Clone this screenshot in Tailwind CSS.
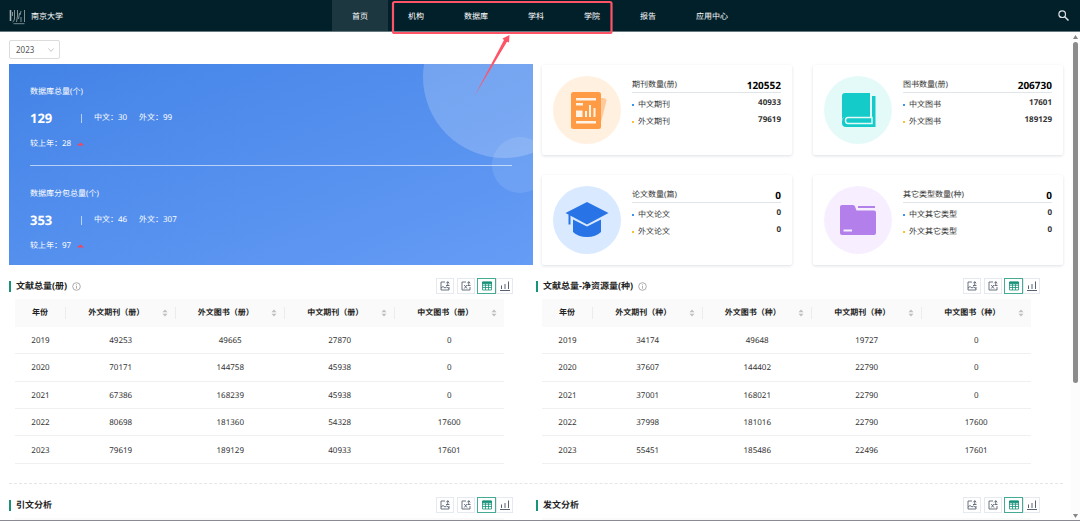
<!DOCTYPE html>
<html lang="zh-CN">
<head>
<meta charset="utf-8">
<meta name="viewport" content="width=device-width, initial-scale=1">
<title>南京大学</title>
<script src="https://cdn.jsdelivr.net/npm/@tailwindcss/browser@4"></script>
</head>
<body class="font-['Noto_Sans','Noto_Sans_CJK_SC',sans-serif] text-[8px] leading-3 text-[#333] bg-white [text-rendering:geometricPrecision]">
<svg class="hidden">
  <symbol id="i-image" viewBox="0 0 20 20" fill="none" stroke="currentColor" stroke-width="1.8">
    <path d="M10 2H2v16h16v-6M2 14l4-3 4 3 3-2 5 3M15.500 1v8M12.500 4.500l3-3 3 3M12 9h7"/>
  </symbol>
  <symbol id="i-excel" viewBox="0 0 20 20" fill="none" stroke="currentColor" stroke-width="1.8">
    <path d="M10 2H2v16h16v-6M6.500 8l5.500 7M12 8l-5.500 7M15.500 1v8M12.500 4.500l3-3 3 3M13 9h6"/>
  </symbol>
  <symbol id="i-table" viewBox="0 0 20 20" fill="none" stroke="currentColor" stroke-width="1.6">
    <path fill="currentColor" d="M1 2h18v3.500H1z"/><path d="M1 2h18v16H1zM1 8.500h18M1 13h18M7 6v12M13 6v12"/>
  </symbol>
  <symbol id="i-bars" viewBox="0 0 20 20" fill="none" stroke="currentColor" stroke-width="2">
    <path d="M0 19h20M3 16V9M10 16V6M17 16V1"/>
  </symbol>
  <symbol id="i-info" viewBox="0 0 20 20" fill="none" stroke="currentColor" stroke-width="1.8">
    <circle cx="10" cy="10" r="8.500"/><path d="M10 8.500V15M10 5v2"/>
  </symbol>
</svg>

<div class="relative h-screen flex flex-col overflow-hidden border-b border-[#8b8a93]">
  <header class="h-8 shrink-0 grid grid-cols-[1fr_auto_1fr] bg-[#02202a] text-white border-b border-[#66797e]">
    <a href="#" class="flex items-center gap-1.5 pl-[9px] pt-0.5">
      <svg class="w-4 h-4" viewBox="0 0 16 16" fill="none" stroke="#a9b5b8" stroke-width="1">
        <path stroke-width="1.600" d="M1.500 1v11"/><path d="M3.500 3v4M5.500 1v9q0 2-2 3M8.500 1v6l-1 6M10.500 4l-1 6M12 2l-1 4M12 8v5M15.500 1v12" opacity=".75"/><path d="M4.500 14.700h11" opacity=".7"/>
      </svg>
      <span>南京大学</span>
    </a>
    <nav class="flex">
      <a href="#" class="px-5 pt-0.5 flex items-center bg-[#1c373f]">首页</a>
      <a href="#" class="px-5 pt-0.5 flex items-center">机构</a>
      <a href="#" class="px-5 pt-0.5 flex items-center">数据库</a>
      <a href="#" class="px-5 pt-0.5 flex items-center">学科</a>
      <a href="#" class="px-5 pt-0.5 flex items-center">学院</a>
      <a href="#" class="px-5 pt-0.5 flex items-center">报告</a>
      <a href="#" class="px-5 pt-0.5 flex items-center">应用中心</a>
    </nav>
    <button type="button" aria-label="搜索" class="justify-self-end pr-[11px]">
      <svg class="w-[11px] h-[11px]" viewBox="0 0 11 11" fill="none" stroke="#dbe1e2" stroke-width="1.200"><circle cx="4.200" cy="4.200" r="3.300"/><path stroke-width="1.500" d="M6.500 6.500l4 4"/></svg>
    </button>
  </header>

  <div class="flex flex-1 min-h-0">
    <main class="flex-1 min-w-0 overflow-hidden pl-[9px] pr-2 pt-2">
      <div class="relative w-[51px]">
        <label for="year" class="sr-only">年份</label>
        <select id="year" class="block appearance-none w-full h-[19px] py-0 leading-[17px] border border-[#dcdcdc] rounded-xs bg-white pl-1.5 text-[#555]"><option>2023</option></select>
        <svg class="absolute right-1.5 top-2 w-1.5 h-1 pointer-events-none" viewBox="0 0 6 4" fill="none" stroke="#bbb" stroke-width=".8"><path d="M.4.400L3 3.400 5.600.4"/></svg>
      </div>

      <div class="mt-[5px] grid grid-cols-[524fr_521fr] gap-[9px]">
        <section class="relative overflow-hidden h-[201px] bg-linear-to-br from-[#4383e6] to-[#659cf6] text-white px-[21px] pt-[22px]">
          <div class="absolute w-[162px] h-[162px] rounded-full bg-white/20 -top-[68px] -right-[52px]"></div>
          <div class="absolute w-14 h-14 rounded-full bg-white/10 top-[73px] -right-[15px]"></div>
          <div class="relative flex flex-col">
            <h2>数据库总量(个)</h2>
            <div class="mt-2.5 h-5 flex items-center">
              <strong class="w-[51px] text-[13px] leading-5">129</strong><i class="w-px h-[9px] bg-white/60 mr-3"></i>
              <span class="w-[45px]">中文：30</span><span>外文：99</span>
            </div>
            <p class="mt-2.5 flex items-center gap-1.5">较上年：28<svg class="w-[7px] h-1" viewBox="0 0 7 4"><path fill="#f5455c" d="M0 3.500L3.500.500 7 3.500z"/></svg></p>
            <hr class="mt-[15px] border-0 h-px bg-white/60">
            <h2 class="mt-[22px]">数据库分包总量(个)</h2>
            <div class="mt-2.5 h-5 flex items-center">
              <strong class="w-[51px] text-[13px] leading-5">353</strong><i class="w-px h-[9px] bg-white/60 mr-3"></i>
              <span class="w-[45px]">中文：46</span><span>外文：307</span>
            </div>
            <p class="mt-2.5 flex items-center gap-1.5">较上年：97<svg class="w-[7px] h-1" viewBox="0 0 7 4"><path fill="#f5455c" d="M0 3.500L3.500.500 7 3.500z"/></svg></p>
          </div>
        </section>

        <div class="grid grid-cols-2 gap-x-[21px] gap-y-5 pt-px">
          <article class="flex gap-[11px] p-[11px] rounded-xs shadow-[0_1px_3px_#0b2a5026]">
            <svg class="w-[68px] h-[68px] shrink-0" viewBox="0 0 68 68"><circle cx="34" cy="34" r="34" fill="#fff0e0"/><path fill="#ffcb9c" d="M46 22h5q3 1 2.500 3L48 46h-4z"/><rect x="18" y="16" width="30" height="37" rx="2.500" fill="#ff9a45"/><path fill="#fff3e6" d="M23 22h20v2.500H23zM23 27h7v2.500h-7zM23 34.500h6.500V41H23zM32 35h2v6h-2zM36 29h2v12h-2zM40.500 32h2v9h-2zM23 45h20v2.500H23z"/></svg>
            <div class="flex-1">
              <div class="h-[17px] pt-0.5 flex items-center justify-between border-b border-[#e0e5ea]"><h3>期刊数量(册)</h3><strong class="text-[10px] text-black">120552</strong></div>
              <div class="mt-1 h-[17px] flex justify-between"><span class="h-4 flex items-center gap-1"><i class="w-0.5 h-0.5 bg-[#3b95ee]"></i>中文期刊</span><b>40933</b></div>
              <div class="h-[17px] flex justify-between"><span class="h-4 flex items-center gap-1"><i class="w-0.5 h-0.5 bg-[#fac02e]"></i>外文期刊</span><b>79619</b></div>
            </div>
          </article>
          <article class="flex gap-[11px] p-[11px] rounded-xs shadow-[0_1px_3px_#0b2a5026]">
            <svg class="w-[68px] h-[68px] shrink-0" viewBox="0 0 68 68"><circle cx="34" cy="34" r="34" fill="#e4faf9"/><path fill="#15cbc9" d="M21 17h25v24H22q-4 0-4 3V20q0-3 3-3zM48 20h3.500v31H22q-4 0-4-4v-1q0-5 4-5h26z"/><path fill="none" stroke="#e4faf9" stroke-width="1.400" d="M48 41.500H24q-2.500 0-2.500 3t2.500 3h24z"/><path stroke="#e4faf9" stroke-width="1.600" d="M47 19v22"/></svg>
            <div class="flex-1">
              <div class="h-[17px] pt-0.5 flex items-center justify-between border-b border-[#e0e5ea]"><h3>图书数量(册)</h3><strong class="text-[10px] text-black">206730</strong></div>
              <div class="mt-1 h-[17px] flex justify-between"><span class="h-4 flex items-center gap-1"><i class="w-0.5 h-0.5 bg-[#3b95ee]"></i>中文图书</span><b>17601</b></div>
              <div class="h-[17px] flex justify-between"><span class="h-4 flex items-center gap-1"><i class="w-0.5 h-0.5 bg-[#fac02e]"></i>外文图书</span><b>189129</b></div>
            </div>
          </article>
          <article class="flex gap-[11px] p-[11px] rounded-xs shadow-[0_1px_3px_#0b2a5026]">
            <svg class="w-[68px] h-[68px] shrink-0" viewBox="0 0 68 68"><circle cx="34" cy="34" r="34" fill="#d9e9ff"/><path fill="#2874e6" d="M12.500 27L34 16l21.500 11L34 38.500zM15.500 28h2v10.500h-2zM20 33.500l14 7 14-7V46q-5 5-14 5t-14-5z"/></svg>
            <div class="flex-1">
              <div class="h-[17px] pt-0.5 flex items-center justify-between border-b border-[#e0e5ea]"><h3>论文数量(篇)</h3><strong class="text-[10px] text-black">0</strong></div>
              <div class="mt-1 h-[17px] flex justify-between"><span class="h-4 flex items-center gap-1"><i class="w-0.5 h-0.5 bg-[#3b95ee]"></i>中文论文</span><b>0</b></div>
              <div class="h-[17px] flex justify-between"><span class="h-4 flex items-center gap-1"><i class="w-0.5 h-0.5 bg-[#fac02e]"></i>外文论文</span><b>0</b></div>
            </div>
          </article>
          <article class="flex gap-[11px] p-[11px] rounded-xs shadow-[0_1px_3px_#0b2a5026]">
            <svg class="w-[68px] h-[68px] shrink-0" viewBox="0 0 68 68"><circle cx="34" cy="34" r="34" fill="#f7efff"/><path fill="#b37feb" d="M18 19h11q1.500 0 2 1.500l1.500 4H50q2 0 2 2V47q0 2-2 2H18q-2 0-2-2V21q0-2 2-2zM34 20h17v2H34z"/><path fill="#f7efff" d="M19.500 43.500H28v2h-8.500z"/></svg>
            <div class="flex-1">
              <div class="h-[17px] pt-0.5 flex items-center justify-between border-b border-[#e0e5ea]"><h3>其它类型数量(种)</h3><strong class="text-[10px] text-black">0</strong></div>
              <div class="mt-1 h-[17px] flex justify-between"><span class="h-4 flex items-center gap-1"><i class="w-0.5 h-0.5 bg-[#3b95ee]"></i>中文其它类型</span><b>0</b></div>
              <div class="h-[17px] flex justify-between"><span class="h-4 flex items-center gap-1"><i class="w-0.5 h-0.5 bg-[#fac02e]"></i>外文其它类型</span><b>0</b></div>
            </div>
          </article>
        </div>
      </div>

      <div id="totals" class="mt-3 grid grid-cols-2 pb-[19px] border-b border-dashed border-[#e6e6e6]"></div>
      <div id="analysis" class="mt-3 grid grid-cols-2"></div>
    </main>

    <div aria-hidden="true" class="w-[9px] flex flex-col items-center pt-[3px] pb-0.5 bg-[#fcfcfc]">
      <svg class="w-[5px] h-1" viewBox="0 0 5 4"><path fill="#858585" d="M0 4L2.500 0 5 4z"/></svg>
      <div class="mt-[3px] w-[5px] h-[341px] rounded-full bg-[#8b8b8b]"></div>
      <svg class="mt-auto w-[5px] h-1" viewBox="0 0 5 4"><path fill="#858585" d="M0 0l2.500 4L5 0z"/></svg>
    </div>
  </div>

  <svg class="absolute top-0 left-1/2 -ml-[150px] w-[224px] h-[100px] pointer-events-none" viewBox="0 0 224 100">
    <rect x="3" y="2" width="218.500" height="31" rx="1.500" fill="none" stroke="#ff5468" stroke-width="2.200"/>
    <path fill="#ff5468" d="M84.500 96L114 40l-1.500-1.500 7-3.500-.5 7.500-2-.8z"/>
  </svg>
</div>

<script>
const sortIcon = '<svg class="w-1.5 h-2 shrink-0" viewBox="0 0 6 8"><path fill="#bfbfbf" d="M.5 3.300L3 .5l2.500 2.800zM.5 4.700L3 7.500l2.500-2.800z"/></svg>';
const years = [2019, 2020, 2021, 2022, 2023];
const tool = (icon, label, width) => `<button type="button" aria-label="${label}" class="${width} h-4 flex items-center justify-center border border-[#e6eaf0] text-[#596273]"><svg class="w-2.5 h-2.5 shrink-0"><use href="#${icon}"/></svg></button>`;

function table(unit, rows) {
  const heads = ['外文期刊', '外文图书', '中文期刊', '中文图书'].map((h, i) =>
    `<th class="p-0"><div class="flex items-center h-3 pl-[5px] pr-[7px] ${i < 3 ? 'border-r border-[#ececec]' : ''}"><span class="flex-1">${h}（${unit}）</span><button type="button" aria-label="排序">${sortIcon}</button></div></th>`).join('');
  const body = rows.map((r, i) =>
    `<tr class="border-b border-[#f0f0f0]"><td class="pt-0.5">${years[i]}</td>${r.map(v => `<td class="pt-0.5">${v}</td>`).join('')}</tr>`).join('');
  return `<table class="ml-1.5 mt-1 w-[calc(100%-15px)] h-[165px] table-fixed border-collapse text-center">
      <thead><tr class="h-7 bg-[#fafafa] text-[#222]"><th class="p-0 w-[51px]"><div class="h-3 border-r border-[#ececec]">年份</div></th>${heads}</tr></thead>
      <tbody>${body}</tbody>
    </table>`;
}

function panel(title, unit, rows) {
  return `<section class="pr-[23px]">
    <div class="h-[18px] flex items-center">
      <i class="w-0.5 h-[11px] bg-[#17937a] mr-[5px]"></i>
      <h2 class="text-[9px] font-bold text-[#222]">${title}</h2>
      ${rows ? '<svg class="ml-[5px] w-[9px] h-[9px] text-[#999]"><use href="#i-info"/></svg>' : ''}
      <div class="ml-auto flex">
        <div class="flex gap-[3px] mr-0.5">${tool('i-image', '导出图片', 'w-[18px]')}${tool('i-excel', '导出表格', 'w-[18px]')}</div>
        <button type="button" aria-label="表格" class="w-[19px] h-4 flex items-center justify-center border border-[#46ab95] text-[#17937a]"><svg class="w-2.5 h-2.5 shrink-0"><use href="#i-table"/></svg></button>
        ${tool('i-bars', '图表', 'w-[17px]')}
      </div>
    </div>
    ${rows ? table(unit, rows) : '<div class="ml-1.5 mt-1 mr-[9px] h-7 bg-[#fafafa]"></div>'}
  </section>`;
}

document.getElementById('totals').innerHTML =
  panel('文献总量(册)', '册', [[49253,49665,27870,0],[70171,144758,45938,0],[67386,168239,45938,0],[80698,181360,54328,17600],[79619,189129,40933,17601]]) +
  panel('文献总量-净资源量(种)', '种', [[34174,49648,19727,0],[37607,144402,22790,0],[37001,168021,22790,0],[37998,181016,22790,17600],[55451,185486,22496,17601]]);
document.getElementById('analysis').innerHTML = panel('引文分析') + panel('发文分析');
</script>
</body>
</html>
